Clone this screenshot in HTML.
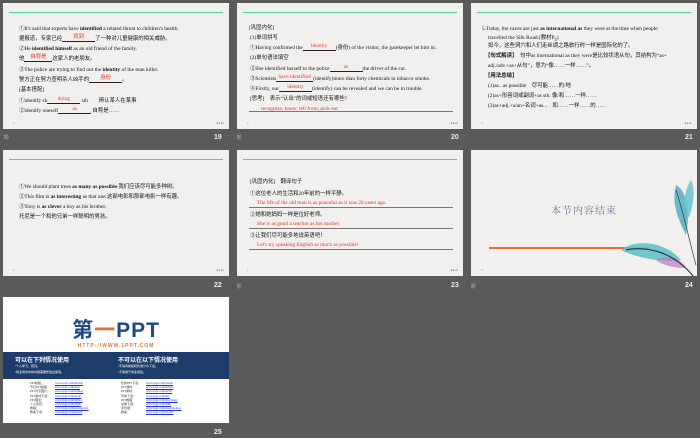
<!DOCTYPE html>
<html><head><meta charset="utf-8"><style>
*{margin:0;padding:0;box-sizing:border-box}
body{width:700px;height:438px;background:#5a5a5a;position:relative;overflow:hidden;font-family:"Liberation Serif","Noto Sans CJK SC",serif;}
.s{position:absolute;width:226px;height:126px;background:#f1f0ee;overflow:hidden}
.g{position:absolute;left:6px;right:6px;top:9px;height:1px;background:#4fcf98}
.t{position:absolute;left:16px;font-size:5.4px;color:#111;white-space:nowrap;line-height:6px}
.r{color:#e8322e}
.u{display:inline-block;border-bottom:0.6px solid #222;text-align:center;height:6px;vertical-align:top}
.u span{position:relative;top:-2px;color:#e8322e}
.num{position:absolute;color:#eee;font:bold 7px "Liberation Sans",sans-serif}
.lab{position:absolute;color:#bbb;font-size:5px;font-family:"Noto Sans CJK SC",sans-serif}
.nav{position:absolute;right:5px;bottom:4px;font-size:3.5px;color:#777}
.dot{position:absolute;left:10px;bottom:4px;font-size:3px;color:#777}
.hl{position:absolute;left:16px;right:12px;height:1.2px;background:#777}
b{font-weight:bold}
</style></head><body>

<!-- slide 19 -->
<div class="s" style="left:3px;top:3px">
<div class="g"></div>
<div class="t" style="top:23px">①It's said that experts have <b>identified</b> a related threat to children's health.</div>
<div class="t" style="top:33px">据报道，专家已经<span class="u" style="width:33px"><span>找到</span></span>了一种对儿童健康的相关威胁。</div>
<div class="t" style="top:43px">②He <b>identified himself</b> as an old friend of the family.</div>
<div class="t" style="top:53px">他<span class="u" style="width:28px"><span>自称是</span></span>这家人的老朋友。</div>
<div class="t" style="top:64px">③The police are trying to find out the <b>identity</b> of the man killer.</div>
<div class="t" style="top:74px">警方正在努力查明杀人凶手的<span class="u" style="width:33px"><span>身份</span></span>。</div>
<div class="t" style="top:84px">[基本搭配]</div>
<div class="t" style="top:95px">①identify sb<span class="u" style="width:33px"><span>doing</span></span> sth　　辨认某人在某事</div>
<div class="t" style="top:105px">②identify oneself<span class="u" style="width:33px"><span>as</span></span> 自称是……</div>
<div class="dot">≡</div><div class="nav">◂ ▸ ▸|</div>
</div>
<div class="lab" style="left:4px;top:134px">阶</div><div class="num" style="left:214px;top:134px">19</div>

<!-- slide 20 -->
<div class="s" style="left:237px;top:3px">
<div class="g"></div>
<div class="t" style="top:22px;left:12px">[巩固内化]</div>
<div class="t" style="top:32px;left:13px">(1)单词拼写</div>
<div class="t" style="top:42px;left:13px">①Having confirmed the<span class="u" style="width:33px"><span>identity</span></span>(身份) of the visitor, the gatekeeper let him in.</div>
<div class="t" style="top:52px;left:13px">(2)单句语法填空</div>
<div class="t" style="top:63px;left:13px">②She identified herself to the police<span class="u" style="width:33px"><span>as</span></span>the driver of the car.</div>
<div class="t" style="top:73px;left:13px">③Scientists<span class="u" style="width:37px"><span>have identified</span></span>(identify)more than forty chemicals in tobacco smoke.</div>
<div class="t" style="top:83px;left:13px">④Firstly, our<span class="u" style="width:33px"><span>identity</span></span>(identify) can be revealed and we can be in trouble.</div>
<div class="t" style="top:93px;left:13px">[思考]　表示“认出”的词或短语还有哪些?</div>
<div class="t r" style="top:103px;left:24px">recognize, know, tell from, pick out</div>
<div class="hl" style="top:108px;left:12px;right:10px"></div>
<div class="dot">≡</div><div class="nav">◂ ▸ ▸|</div>
</div>
<div class="lab" style="left:237px;top:134px">阶</div><div class="num" style="left:451px;top:134px">20</div>

<!-- slide 21 -->
<div class="s" style="left:471px;top:3px">
<div class="g"></div>
<div class="t" style="top:23px;left:11px">5.Today, the caves are just <b>as international as</b> they were at the time when people</div>
<div class="t" style="top:32px;left:17px">travelled the Silk Road.(教材P<sub>5</sub>)</div>
<div class="t" style="top:40px;left:17px">如今，这些洞穴和人们走丝绸之路旅行时一样是国际化的了。</div>
<div class="t" style="top:50px;left:14px"><b>【句式解读】</b>　句中as international as they were是比较状语从句，其结构为“as+</div>
<div class="t" style="top:60px;left:17px">adj./adv.+as+从句”，意为“像……一样……”。</div>
<div class="t" style="top:70px;left:14px"><b>【用法总结】</b></div>
<div class="t" style="top:80px;left:17px">(1)as...as possible　尽可能……的/地</div>
<div class="t" style="top:90px;left:17px">(2)as+形容词或副词+as sth. 像/和……一样……</div>
<div class="t" style="top:100px;left:17px">(3)as+adj.+a/an+名词+as...　和……一样……的……</div>
<div class="dot">≡</div><div class="nav">◂ ▸ ▸|</div>
</div>
<div class="num" style="left:685px;top:134px">21</div>

<!-- slide 22 -->
<div class="s" style="left:3px;top:150px">
<div class="g"></div>
<div class="t" style="top:34px">①We should plant trees <b>as many as possible</b>.我们应该尽可能多种树。</div>
<div class="t" style="top:44px">②This film is <b>as interesting</b> as that one.这部电影和那部电影一样有趣。</div>
<div class="t" style="top:54px">③Tony is <b>as clever</b> a boy as his brother.</div>
<div class="t" style="top:64px">托尼是一个和他兄弟一样聪明的男孩。</div>
<div class="dot">≡</div><div class="nav">◂ ▸ ▸|</div>
</div>
<div class="num" style="left:214px;top:282px">22</div>

<!-- slide 23 -->
<div class="s" style="left:237px;top:150px">
<div class="g"></div>
<div class="t" style="top:29px;left:13px">[巩固内化]　翻译句子</div>
<div class="t" style="top:41px;left:13px">①这位老人的生活和20年前的一样平静。</div>
<div class="t r" style="top:50px;left:20px">The life of the old man is as peaceful as it was 20 years ago.</div>
<div class="hl" style="top:57px;left:12px;right:10px"></div>
<div class="t" style="top:62px;left:13px">②她和她妈妈一样是位好老师。</div>
<div class="t r" style="top:71px;left:20px">She is as good a teacher as her mother.</div>
<div class="hl" style="top:78px;left:12px;right:10px"></div>
<div class="t" style="top:83px;left:13px">③让我们尽可能多地说英语吧！</div>
<div class="t r" style="top:92px;left:20px">Let's try speaking English as much as possible!</div>
<div class="hl" style="top:99px;left:12px;right:10px"></div>
<div class="dot">≡</div><div class="nav">◂ ▸ ▸|</div>
</div>
<div class="lab" style="left:237px;top:283px">阶</div><div class="num" style="left:451px;top:282px">23</div>

<!-- slide 24 -->
<div class="s" style="left:471px;top:150px">
<div style="position:absolute;left:0;right:0;top:52px;text-align:center;font-size:10px;color:#6f7a90;letter-spacing:1px;font-family:'Noto Serif CJK SC',serif">本节内容结束</div>
<div style="position:absolute;left:18px;width:160px;top:97px;height:1.5px;background:#f06a2a"></div>
<svg style="position:absolute;left:0;top:0" width="226" height="126">
<path d="M150 100 C165 88,195 92,210 110 C195 112,170 110,150 100Z" fill="#5bbfc4" opacity=".85"/>
<path d="M185 110 C195 104,210 108,215 118 C205 118,192 116,185 110Z" fill="#b77ac7" opacity=".7"/>
<path d="M205 35 C215 40,220 60,215 85 C208 70,200 55,205 35Z" fill="#4fb0c8" opacity=".85"/>
<path d="M220 30 C225 40,222 55,218 68 C212 58,212 42,220 30Z" fill="#6cc3d0" opacity=".85"/>
<path d="M155 100 C180 95,205 105,222 126" stroke="#222" stroke-width="1" fill="none"/>
<path d="M205 40 C212 60,218 90,225 115" stroke="#333" stroke-width=".7" fill="none"/>
</svg>
<div class="dot">≡</div>
</div>
<div class="lab" style="left:471px;top:283px">阶</div><div class="num" style="left:685px;top:282px">24</div>

<!-- slide 25 -->
<div class="s" style="left:3px;top:297px;background:#fff">
<div style="position:absolute;left:0;right:0;top:17px;text-align:center;font:bold 21px 'Liberation Sans','Noto Sans CJK SC',sans-serif;color:#1e4a86;letter-spacing:1px">第<span style="color:#e8742a">一</span>PPT</div>
<div style="position:absolute;left:0;right:0;top:46px;text-align:center;font:bold 5px 'Liberation Sans',sans-serif;color:#e8742a;letter-spacing:1px">HTTP://WWW.1PPT.COM</div>
<div style="position:absolute;left:0;right:0;top:55px;height:27px;background:#1d3b6b;color:#fff">
<div style="position:absolute;left:12px;top:3px;font:bold 6px 'Noto Sans CJK SC',sans-serif">可以在下列情况使用</div>
<div style="position:absolute;left:115px;top:3px;font:bold 6px 'Noto Sans CJK SC',sans-serif">不可以在以下情况使用</div>
<div style="position:absolute;left:12px;top:12px;font-size:3px">•个人学习、研究。</div>
<div style="position:absolute;left:12px;top:18px;font-size:3px">•商业场合中的内容需要修改后使用。</div>
<div style="position:absolute;left:115px;top:12px;font-size:3px">•不得将模板转售或分享下载。</div>
<div style="position:absolute;left:115px;top:18px;font-size:3px">•不得用于商业用途。</div>
</div>
<div style="position:absolute;left:27px;top:84px;font-size:3px;line-height:4.2px;color:#333">PPT模板：<br>节日PPT模板：<br>PPT背景图片：<br>PPT素材下载：<br>PPT图表：<br>个人简历：<br>教程：<br>教案下载：</div>
<div style="position:absolute;left:52px;top:84px;font-size:3px;line-height:4.2px;color:#2030e0;text-decoration:underline">www.1ppt.com/moban/<br>www.1ppt.com/jieri/<br>www.1ppt.com/beijing/<br>www.1ppt.com/sucai/<br>www.1ppt.com/tubiao/<br>www.1ppt.com/jianli/<br>www.1ppt.com/powerpoint/<br>www.1ppt.com/jiaoan/</div>
<div style="position:absolute;left:118px;top:84px;font-size:3px;line-height:4.2px;color:#333">优秀PPT下载：<br>PPT课件：<br>PPT素材：<br>字体下载：<br>PPT教程：<br>试卷下载：<br>手抄报：<br>教案：</div>
<div style="position:absolute;left:143px;top:84px;font-size:3px;line-height:4.2px;color:#2030e0;text-decoration:underline">www.1ppt.com/xiazai/<br>www.1ppt.com/kejian/<br>www.1ppt.com/sucai/<br>www.1ppt.com/ziti/<br>www.1ppt.com/jiaocheng/<br>www.1ppt.com/shiti/<br>www.1ppt.com/shouchaobao/<br>www.1ppt.com/jiaoan/</div>
</div>
<div class="num" style="left:214px;top:429px">25</div>
</body></html>
